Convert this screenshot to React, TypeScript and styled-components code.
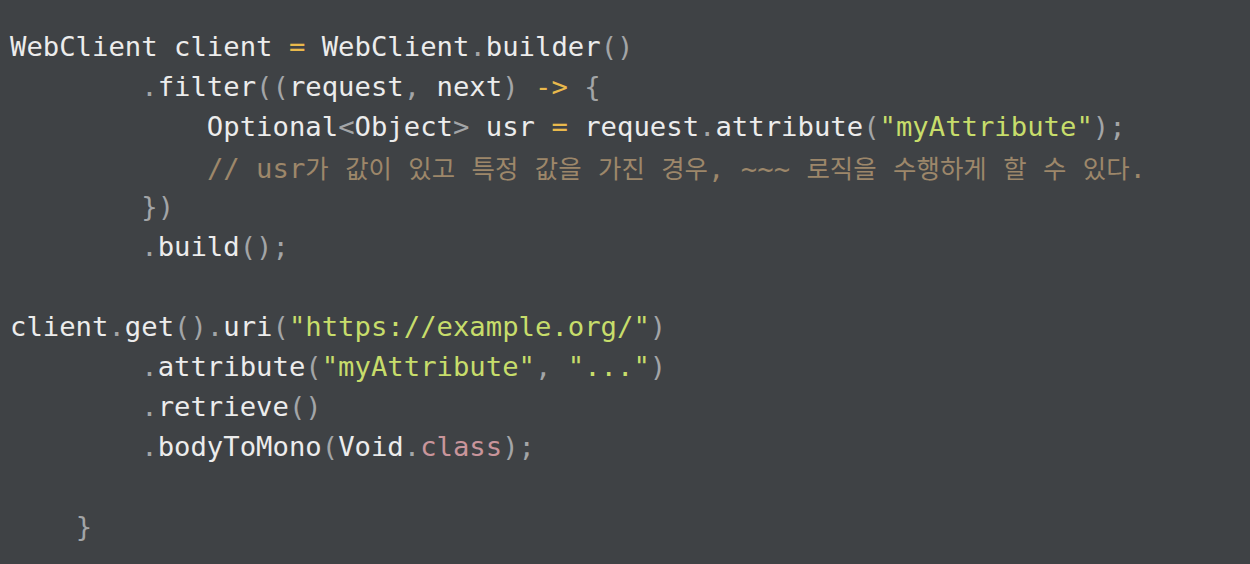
import React from "react";
import styled, { createGlobalStyle } from "styled-components";

const Global = createGlobalStyle`
  html, body { margin: 0; padding: 0; background: #3f4245; }
`;

const Block = styled.div`
  box-sizing: border-box;
  width: 1250px;
  height: 564px;
  overflow: hidden;
  background: #3f4245;
  padding: 27px 0 0 10px;
  font-family: "DejaVu Sans Mono", "Liberation Mono", monospace;
  font-size: 27.25px;
  color: #eeeeee;
`;

const Line = styled.div`
  height: 40px;
  line-height: 40px;
  white-space: pre;
`;

type Kind = "plain" | "punc" | "op" | "str" | "kw" | "cmt";

const colors: Record<Kind, string> = {
  plain: "#ececec",
  punc: "#a3a5a7",
  op: "#e9b94c",
  str: "#c7dd6b",
  kw: "#c9959b",
  cmt: "#9d876a",
};

const Tok = styled.span<{ $k: Kind }>`
  color: ${(p) => colors[p.$k]};
`;

const Hangul = styled.span`
  font-family: "Noto Sans CJK KR", "DejaVu Sans Mono", sans-serif;
  font-size: 25.45px;
`;

const T = ({ k = "plain", children }: { k?: Kind; children: React.ReactNode }) => (
  <Tok $k={k}>{children}</Tok>
);

const Comment = ({ text }: { text: string }) => {
  const parts = text.split(/([\uAC00-\uD7A3]+)/);
  return (
    <Tok $k="cmt">
      {parts.map((p, i) =>
        /[\uAC00-\uD7A3]/.test(p) ? <Hangul key={i}>{p}</Hangul> : <React.Fragment key={i}>{p}</React.Fragment>
      )}
    </Tok>
  );
};

export default function App() {
  return (
    <>
      <Global />
      <Block>
        <Line>
          <T>WebClient client </T>
          <T k="op">=</T>
          <T> WebClient</T>
          <T k="punc">.</T>
          <T>builder</T>
          <T k="punc">()</T>
        </Line>
        <Line>
          <T>{"        "}</T>
          <T k="punc">.</T>
          <T>filter</T>
          <T k="punc">((</T>
          <T>request</T>
          <T k="punc">,</T>
          <T> next</T>
          <T k="punc">)</T>
          <T> </T>
          <T k="op">{"->"}</T>
          <T> </T>
          <T k="punc">{"{"}</T>
        </Line>
        <Line>
          <T>{"            Optional"}</T>
          <T k="punc">{"<"}</T>
          <T>Object</T>
          <T k="punc">{">"}</T>
          <T> usr </T>
          <T k="op">=</T>
          <T> request</T>
          <T k="punc">.</T>
          <T>attribute</T>
          <T k="punc">(</T>
          <T k="str">"myAttribute"</T>
          <T k="punc">);</T>
        </Line>
        <Line>
          <T>{"            "}</T>
          <Comment text="// usr가 값이 있고 특정 값을 가진 경우, ~~~ 로직을 수행하게 할 수 있다." />
        </Line>
        <Line>
          <T>{"        "}</T>
          <T k="punc">{"})"}</T>
        </Line>
        <Line>
          <T>{"        "}</T>
          <T k="punc">.</T>
          <T>build</T>
          <T k="punc">();</T>
        </Line>
        <Line> </Line>
        <Line>
          <T>client</T>
          <T k="punc">.</T>
          <T>get</T>
          <T k="punc">().</T>
          <T>uri</T>
          <T k="punc">(</T>
          <T k="str">"https://example.org/"</T>
          <T k="punc">)</T>
        </Line>
        <Line>
          <T>{"        "}</T>
          <T k="punc">.</T>
          <T>attribute</T>
          <T k="punc">(</T>
          <T k="str">"myAttribute"</T>
          <T k="punc">,</T>
          <T> </T>
          <T k="str">"..."</T>
          <T k="punc">)</T>
        </Line>
        <Line>
          <T>{"        "}</T>
          <T k="punc">.</T>
          <T>retrieve</T>
          <T k="punc">()</T>
        </Line>
        <Line>
          <T>{"        "}</T>
          <T k="punc">.</T>
          <T>bodyToMono</T>
          <T k="punc">(</T>
          <T>Void</T>
          <T k="punc">.</T>
          <T k="kw">class</T>
          <T k="punc">);</T>
        </Line>
        <Line> </Line>
        <Line>
          <T>{"    "}</T>
          <T k="punc">{"}"}</T>
        </Line>
      </Block>
    </>
  );
}
